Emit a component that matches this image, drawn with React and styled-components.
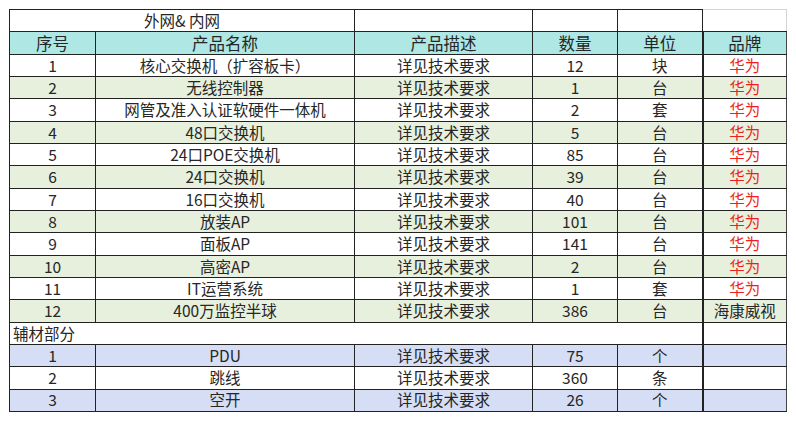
import React from 'react';
import styled, { createGlobalStyle } from 'styled-components';

const GlobalStyle = createGlobalStyle`
  html, body {
    margin: 0;
    padding: 0;
    background: #fff;
  }
  body {
    font-family: "Noto Sans CJK SC", "Liberation Sans", sans-serif;
    color: #262626;
  }
`;

const Page = styled.div`
  padding: 9px 0 0 9px;
`;

const Sheet = styled.table`
  border-collapse: collapse;
  table-layout: fixed;
  width: 777px;
  line-height: 1;

  td {
    height: 21.33px;
    padding: 0;
    border: 1px solid #222;
    text-align: center;
    vertical-align: middle;
    white-space: nowrap;
    overflow: hidden;
  }
  td:nth-child(6) {
    border-right-color: #444;
  }
`;

const Row = styled.tr`
  background: ${(p) =>
    p.$tone === 'head' ? '#aee7e3' : p.$tone === 'green' ? '#e6f0dc' : p.$tone === 'blue' ? '#d6def5' : '#fff'};
  td {
    font-size: ${(p) => (p.$tone === 'head' ? '16.5px' : '15.5px')};
  }
`;

const GhostCell = styled.td`
  && {
    border-top-color: #d4d4d4;
    border-right-color: #d4d4d4;
  }
`;

const BrandCell = styled.td`
  && {
    border-left: 2px solid #222;
    color: ${(p) => (p.$red ? '#f01e1e' : '#262626')};
  }
`;

const SectionCell = styled.td`
  && {
    text-align: left;
    padding-left: 3px;
  }
`;

const main = [
  ['1', '核心交换机（扩容板卡）', '12', '块', '华为'],
  ['2', '无线控制器', '1', '台', '华为'],
  ['3', '网管及准入认证软硬件一体机', '2', '套', '华为'],
  ['4', '48口交换机', '5', '台', '华为'],
  ['5', '24口POE交换机', '85', '台', '华为'],
  ['6', '24口交换机', '39', '台', '华为'],
  ['7', '16口交换机', '40', '台', '华为'],
  ['8', '放装AP', '101', '台', '华为'],
  ['9', '面板AP', '141', '台', '华为'],
  ['10', '高密AP', '2', '台', '华为'],
  ['11', 'IT运营系统', '1', '套', '华为'],
  ['12', '400万监控半球', '386', '台', '海康威视'],
];

const extra = [
  ['1', 'PDU', '75', '个'],
  ['2', '跳线', '360', '条'],
  ['3', '空开', '26', '个'],
];

const App = () => (
  <Page>
    <GlobalStyle />
    <Sheet>
      <colgroup>
        <col style={{ width: 86 }} />
        <col style={{ width: 259 }} />
        <col style={{ width: 178 }} />
        <col style={{ width: 85 }} />
        <col style={{ width: 85 }} />
        <col style={{ width: 84 }} />
      </colgroup>
      <tbody>
        <Row>
          <td colSpan={2}>外网&amp; 内网</td>
          <td />
          <td />
          <td />
          <GhostCell />
        </Row>
        <Row $tone="head">
          <td>序号</td>
          <td>产品名称</td>
          <td>产品描述</td>
          <td>数量</td>
          <td>单位</td>
          <BrandCell>品牌</BrandCell>
        </Row>
        {main.map(([no, name, qty, unit, brand], i) => (
          <Row key={no} $tone={i % 2 ? 'green' : 'white'}>
            <td>{no}</td>
            <td>{name}</td>
            <td>详见技术要求</td>
            <td>{qty}</td>
            <td>{unit}</td>
            <BrandCell $red={brand === '华为'}>{brand}</BrandCell>
          </Row>
        ))}
        <Row>
          <SectionCell colSpan={5}>辅材部分</SectionCell>
          <BrandCell />
        </Row>
        {extra.map(([no, name, qty, unit], i) => (
          <Row key={'x' + no} $tone={i % 2 ? 'white' : 'blue'}>
            <td>{no}</td>
            <td>{name}</td>
            <td>详见技术要求</td>
            <td>{qty}</td>
            <td>{unit}</td>
            <BrandCell />
          </Row>
        ))}
      </tbody>
    </Sheet>
  </Page>
);

export default App;
